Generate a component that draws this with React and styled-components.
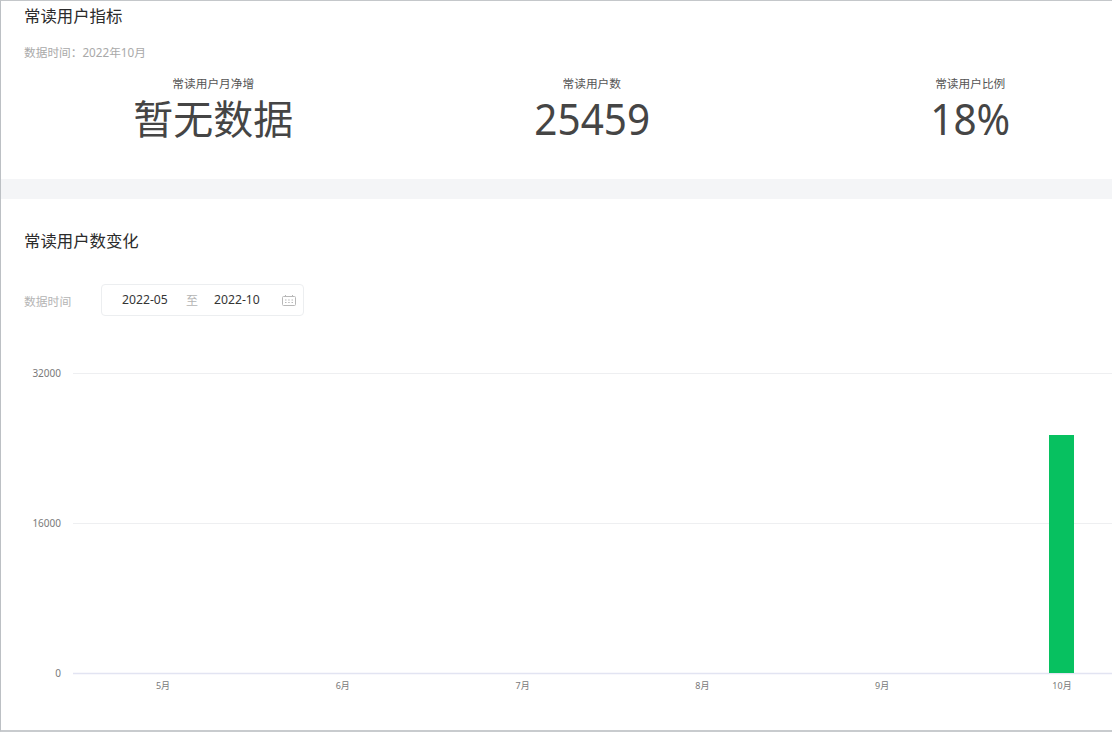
import React from 'react'
import styled, { createGlobalStyle } from 'styled-components'

const GlobalStyle = createGlobalStyle`
  html, body {
    margin: 0;
    padding: 0;
    background: #fff;
  }
  body {
    font-family: "Noto Sans", "Noto Sans CJK SC", sans-serif;
    color: #353535;
  }
`

const Page = styled.div`
  box-sizing: border-box;
  width: 1112px;
  height: 732px;
  overflow: hidden;
  background: #fff;
  border-top: 1px solid #c4c7ca;
  border-left: 1px solid #bcc0c4;
  border-bottom: 2px solid #c8cbce;
`

const Section = styled.section`
  box-sizing: border-box;
  height: ${p => p.$height}px;
  width: 1170px;
  padding: ${p => p.$top}px 0 0 23px;
`

const Band = styled.div`
  height: 20px;
  width: 100%;
  background: #f4f5f7;
`

const Title = styled.h2`
  margin: 0;
  font-size: 16.4px;
  font-weight: 400;
  line-height: 24px;
  color: #2b2b2b;
`

const Note = styled.p`
  margin: 15px 0 0;
  font-size: 11.7px;
  line-height: 18px;
  color: #a9a9a9;
`

const Metrics = styled.div`
  display: grid;
  grid-template-columns: repeat(3, 378.5px);
  margin-top: 13px;
`

const Metric = styled.div`
  text-align: center;
`

const MetricLabel = styled.div`
  font-size: 11.7px;
  line-height: 18px;
  color: #555;
`

const MetricValue = styled.div`
  margin-top: ${p => (p.$numeric ? 0 : 1)}px;
  font-size: ${p => (p.$numeric ? 44 : 40)}px;
  font-weight: 400;
  line-height: 52px;
  color: #454545;
  transform: ${p => (p.$numeric ? 'scaleX(0.92)' : 'none')};
`

const Filter = styled.div`
  display: flex;
  align-items: center;
  margin-top: 31px;
`

const FilterLabel = styled.span`
  width: 77px;
  font-size: 11.8px;
  line-height: 18px;
  padding-top: 2px;
  color: #b4b4b4;
`

const RangePicker = styled.div`
  box-sizing: border-box;
  display: flex;
  align-items: center;
  width: 203px;
  height: 32px;
  padding: 0 7px 0 20px;
  border: 1px solid #eceef0;
  border-radius: 4px;
`

const DateText = styled.span`
  width: 46px;
  font-size: 12.2px;
  line-height: 18px;
  color: #353535;
`

const RangeSep = styled.span`
  width: 46px;
  padding-left: 18px;
  box-sizing: border-box;
  font-size: 12px;
  color: #b4b4b4;
`

const CalendarIcon = styled.svg`
  margin-left: auto;
  display: block;
`

const ChartBox = styled.svg`
  display: block;
  margin: 41px 0 0 -23px;
`

const AxisText = styled.text`
  font-size: ${p => (p.$value ? 10 : 9)}px;
  fill: #7a7a7a;
`

const metrics = [
  { label: '常读用户月净增', value: '暂无数据' },
  { label: '常读用户数', value: '25459', numeric: true },
  { label: '常读用户比例', value: '18%', numeric: true },
]

const yTicks = [
  { label: '32000', y: 372 },
  { label: '16000', y: 522 },
  { label: '0', y: 672 },
]

const months = ['5月', '6月', '7月', '8月', '9月', '10月']

// viewBox starts at the chart's top on the page so coordinates below stay readable
const CHART_TOP = 356

function TrendChart() {
  return (
    <ChartBox width="1170" height="374" viewBox={`0 ${CHART_TOP} 1170 374`}>
      {yTicks.map(t => (
        <g key={t.label}>
          <AxisText $value x="60" y={t.y + 4} textAnchor="end">{t.label}</AxisText>
          <line
            x1="72"
            x2="1170"
            y1={t.y + 0.5}
            y2={t.y + 0.5}
            stroke={t.label === '0' ? '#e2e4f2' : '#eeeff1'}
            strokeWidth={t.label === '0' ? 1.5 : 1}
          />
        </g>
      ))}
      <rect x="1048" y="434" width="25" height="238" fill="#07c160" />
      {months.map((m, i) => (
        <AxisText key={m} x={162 + i * 179.8} y="688" textAnchor="middle">{m}</AxisText>
      ))}
    </ChartBox>
  )
}

export default function App() {
  return (
    <Page>
      <GlobalStyle />
      <Section $height={178} $top={3}>
        <Title>常读用户指标</Title>
        <Note>数据时间：2022年10月</Note>
        <Metrics>
          {metrics.map(m => (
            <Metric key={m.label}>
              <MetricLabel>{m.label}</MetricLabel>
              <MetricValue $numeric={m.numeric}>{m.value}</MetricValue>
            </Metric>
          ))}
        </Metrics>
      </Section>
      <Band />
      <Section $height={532} $top={30}>
        <Title>常读用户数变化</Title>
        <Filter>
          <FilterLabel>数据时间</FilterLabel>
          <RangePicker>
            <DateText>2022-05</DateText>
            <RangeSep>至</RangeSep>
            <DateText>2022-10</DateText>
            <CalendarIcon width="14" height="11" viewBox="0 0 14 11" fill="none" stroke="#b8b8b8">
              <rect x="0.5" y="1.5" width="13" height="9" rx="1" />
              <path d="M3.5 0v2M10.5 0v2M3 5h1.5M6.2 5h1.5M9.5 5h1.5M3 7.5h1.5M6.2 7.5h1.5M9.5 7.5h1.5" />
            </CalendarIcon>
          </RangePicker>
        </Filter>
        <TrendChart />
      </Section>
    </Page>
  )
}
